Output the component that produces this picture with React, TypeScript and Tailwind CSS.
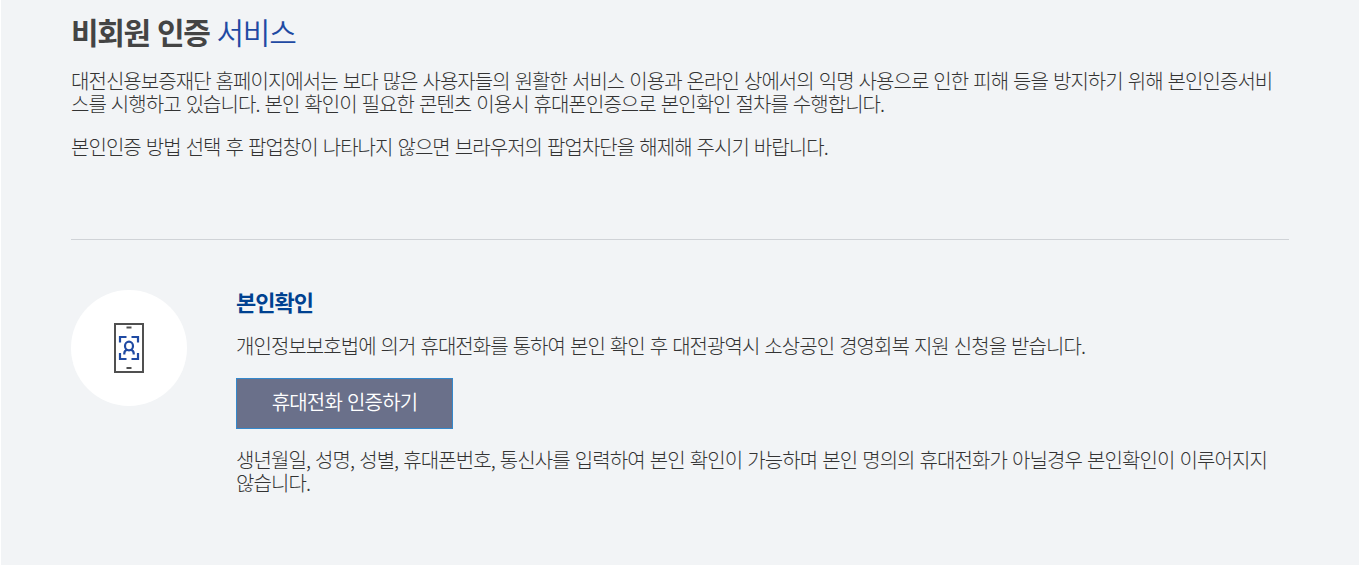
function PhoneAuthIcon() {
  return (
    <svg width="30" height="50" viewBox="0 0 30 50" fill="none" aria-hidden="true">
      <rect x="1" y="1" width="28" height="48" stroke="#505050" strokeWidth="2" />
      <path d="M12.5 4.5h5M12.5 45h5" stroke="#505050" strokeWidth="2" />
      <g stroke="#1f4aa3" strokeWidth="2.2">
        <path d="M6 19.5V14h6.5M17.5 14H24v5.5M24 30v6h-6.5M12.5 36H6v-6" />
        <ellipse cx="15" cy="23" rx="4" ry="4.3" />
        <path d="M10.3 31.5v-1c0-2 1-3.2 2.7-3.7M19.7 31.5v-1c0-2-1-3.2-2.7-3.7" />
      </g>
    </svg>
  )
}

export default function App() {
  return (
    <div className="h-[572px] overflow-hidden bg-white pr-[7px] pl-px font-['Noto_Sans_CJK_KR',sans-serif] text-[20px] leading-[23px] font-light tracking-[-0.95px] text-[#333] [word-spacing:1.5px]">
      <main className="h-[565px] bg-[#f2f4f6] px-[70px]">
        <section className="h-[240px] border-b border-[#d0d3d7] pt-[11px]">
          <h1 className="text-[30px] leading-10 font-bold tracking-[-1.3px] whitespace-nowrap text-[#444]">
            비회원 인증 <span className="font-[350] text-[#1f4aa3]">서비스</span>
          </h1>
          <p className="mt-[18px] whitespace-nowrap">
            <span className="block">
              대전신용보증재단 홈페이지에서는 보다 많은 사용자들의 원활한 서비스 이용과 온라인 상에서의 익명 사용으로 인한 피해 등을 방지하기 위해 본인인증서비
            </span>
            <span className="block">
              스를 시행하고 있습니다. 본인 확인이 필요한 콘텐츠 이용시 휴대폰인증으로 본인확인 절차를 수행합니다.
            </span>
          </p>
          <p className="mt-5 whitespace-nowrap">
            본인인증 방법 선택 후 팝업창이 나타나지 않으면 브라우저의 팝업차단을 해제해 주시기 바랍니다.
          </p>
        </section>

        <section className="flex gap-[49px] pt-[50px]">
          <div className="flex size-[116px] shrink-0 items-center justify-center rounded-full bg-white">
            <PhoneAuthIcon />
          </div>
          <div className="whitespace-nowrap">
            <h2 className="text-[22px] leading-[23px] font-bold tracking-[-1px] text-[#004190]">본인확인</h2>
            <p className="mt-[21px]">
              개인정보보호법에 의거 휴대전화를 통하여 본인 확인 후 대전광역시 소상공인 경영회복 지원 신청을 받습니다.
            </p>
            <button className="mt-[21px] flex h-[51px] w-[217px] items-center justify-center border border-[#3488cc] bg-[#6a708a] pb-1 font-[350] tracking-[-0.85px] text-white [word-spacing:1.5px]">
              휴대전화 인증하기
            </button>
            <p className="mt-[19px] tracking-[-0.91px]">
              <span className="block">
                생년월일, 성명, 성별, 휴대폰번호, 통신사를 입력하여 본인 확인이 가능하며 본인 명의의 휴대전화가 아닐경우 본인확인이 이루어지지
              </span>
              <span className="block">않습니다.</span>
            </p>
          </div>
        </section>
      </main>
    </div>
  )
}
